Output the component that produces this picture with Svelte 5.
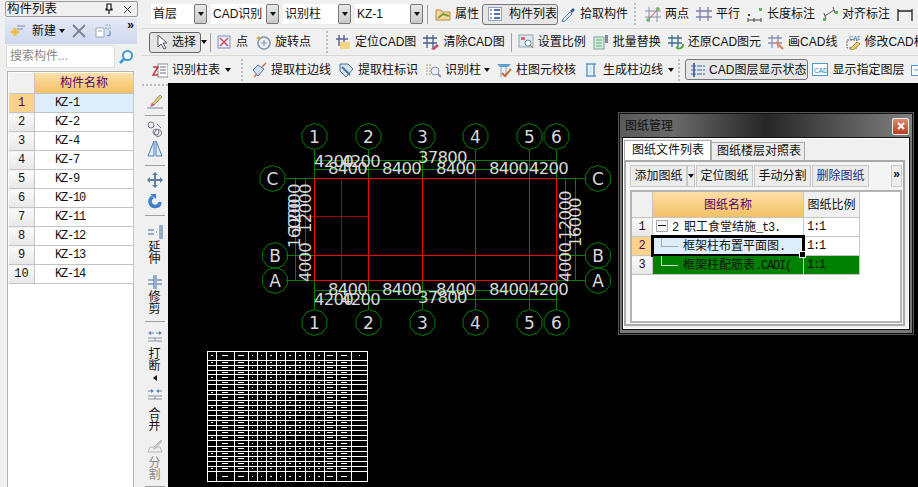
<script>
  const icons = {
    attr: '<path d="M1 4h5l1 2h8v8H1z" fill="#f3d9a0" stroke="#b98b3c"/><path d="M3 12l5-4 6 2" stroke="#7a9a3c" fill="none" stroke-width="2"/>',
    list: '<rect x="1.5" y="1.5" width="13" height="13" fill="#fff" stroke="#8ea4c0"/><path d="M3 4h2M3 8h2M3 12h2" stroke="#445"/><path d="M7 4h6M7 8h6M7 12h6" stroke="#4a76b5" stroke-width="2"/>',
    pick: '<path d="M3 13l7-7 2 2-7 7-3 1z" fill="#dfeaf6" stroke="#5f83b0"/><path d="M10 5l3-3 2 2-3 3z" fill="#3b5f95"/>',
    two: '<path d="M4 1v15M12 1v15M0 5h16M0 11h16" stroke="#8b8fb0"/><path d="M2 15L14 2" stroke="#d05050"/><circle cx="13" cy="3" r="1.7" fill="#5cb85c"/><circle cx="3" cy="14" r="1.7" fill="#5cb85c"/>',
    par: '<path d="M4 1v14M12 1v14M0 5h16M0 11h16" stroke="#7d80a8" stroke-width="1.3"/>',
    len: '<path d="M1 14h13M1 12v4M14 12v4M7 12v4" stroke="#444"/><rect x="1" y="8" width="2" height="2" fill="#444"/><rect x="12" y="2" width="3" height="3" fill="#5cb85c"/>',
    ali: '<path d="M3 10L12 4M2 7l2 6M11 1l2 6" stroke="#555"/><rect x="1" y="12" width="3" height="3" fill="#5cb85c"/><rect x="13" y="5" width="3" height="3" fill="#5cb85c"/>',
    dim: '<path d="M1 3v12M15 3v12M1 5h14" stroke="#222" stroke-width="1.3"/>',
    cur: '<path d="M5 1v12l3-3 3 5 2-1-3-5h4z" fill="#fff" stroke="#556"/>',
    pt: '<rect x="2" y="2" width="12" height="12" fill="#e9eef8" stroke="#7c8fc4"/><path d="M4 4l8 8M12 4l-8 8" stroke="#d8455a" stroke-width="1.4"/>',
    rot: '<circle cx="9" cy="9" r="6" fill="none" stroke="#7d94b4" stroke-width="1.6"/><path d="M9 6v6M6 9h6" stroke="#7d94b4"/><path d="M1 5l3-3 2 3z" fill="#d59a34"/>',
    loc: '<path d="M4 1v11M9 1v11M1 5h12" stroke="#5f5f9a" stroke-width="1.4"/><rect x="5" y="8" width="10" height="7" fill="#f0d488"/>',
    clr: '<path d="M4 1v13M10 1v13M0 4h14M0 9h14" stroke="#47608a" stroke-width="1.3"/><path d="M8 15l6-5 2 2-5 4z" fill="#c05070"/>',
    scale: '<rect x="1" y="1" width="14" height="12" fill="#dfe9f6" stroke="#8aa"/><rect x="3" y="3" width="4" height="3" fill="#d66"/><circle cx="10" cy="9" r="3" fill="#fff" stroke="#68a"/><path d="M12 11l3 3" stroke="#a63"/>',
    batch: '<rect x="1" y="3" width="10" height="12" fill="#d8ecd8" stroke="#7a9"/><path d="M3 6h6M3 9h6M3 12h6" stroke="#5a8"/><path d="M12 1h3v8h-3z" fill="#889"/>',
    rest: '<path d="M4 1v12M10 1v12M0 4h14M0 9h14" stroke="#3f6d8a" stroke-width="1.3"/><path d="M15 10a4 4 0 0 1-7 3" stroke="#5aa83c" fill="none" stroke-width="2"/>',
    draw: '<path d="M4 1v13M10 1v13M0 4h14M0 9h14" stroke="#8a90ba" stroke-width="1.3"/><path d="M8 8l7 7" stroke="#d88a5c" stroke-width="2.4"/>',
    mod: '<path d="M3 6h10v8H3z" fill="none" stroke="#666" stroke-dasharray="2 1"/><path d="M6 15l7-7 3 2-7 6z" fill="#f2cf70" stroke="#b08a30"/><text x="5" y="6" font-size="6" fill="#2a64b0" font-family="Liberation Sans">CAD</text>',
    tbl: '<rect x="6" y="2" width="10" height="13" fill="#fff" stroke="#889"/><path d="M8 5h6M8 8h6M8 11h6" stroke="#667"/><path d="M1 5h5L1 13h5" fill="none" stroke="#c83c3c" stroke-width="1.5"/>',
    edge: '<path d="M2 8l5-5 6 4-6 7z" fill="#cfe0f4" stroke="#4b78ad"/><path d="M11 5l4-4M3 15l3-3" stroke="#d0783c" stroke-width="1.6"/>',
    mark: '<path d="M2 2h8l5 5-7 8-6-6z" fill="#d5e3f3" stroke="#47709f"/><path d="M4 5l8 8" stroke="#47709f" stroke-width="1.8"/>',
    col: '<circle cx="10" cy="9" r="4" fill="#e8eef6" stroke="#8a98a8"/><path d="M13 12l3 3" stroke="#98a" stroke-width="2"/><path d="M2 2v12M5 2v12" stroke="#b5a37c" stroke-dasharray="2 1"/>',
    chk: '<path d="M1 2h14l-3 3H4z" fill="#5aa0d0"/><path d="M5 5v10M10 5v10" stroke="#8ab"/><path d="M6 11l3 3 6-7" stroke="#c07040" fill="none" stroke-width="2"/>',
    gen: '<path d="M3 2h10M3 14h10M4 2v12M11 2v12" stroke="#5a9ac8" stroke-width="1.4"/><rect x="6" y="4" width="3" height="8" fill="#dce8f3"/>',
    layer: '<path d="M4 1v14" stroke="#1f3c78" stroke-width="1.4"/><path d="M1 4h14M1 8h14M1 12h14" stroke="#2b6aa8" stroke-dasharray="5 1"/>',
    show: '<rect x="0.5" y="1.5" width="15" height="12" fill="#fff" stroke="#4f97cc"/><text x="2" y="10.500" font-size="6.500" fill="#2a7ab8" font-family="Liberation Sans">CAD</text>',
    show2: '<rect x="0.5" y="3.500" width="15" height="10" fill="#fff" stroke="#4f97cc"/><path d="M3 8h6" stroke="#4f97cc"/>'
  };

  const row1 = [
    { i: 'attr', t: '属性' }, { i: 'list', t: '构件列表', on: true }, { i: 'pick', t: '拾取构件' }, { grip: true },
    { i: 'two', t: '两点' }, { i: 'par', t: '平行' }, { i: 'len', t: '长度标注' }, { i: 'ali', t: '对齐标注' }, { i: 'dim', t: '' }
  ];
  const combos = [['首层', 43], ['CAD识别', 55], ['识别柱', 55], ['KZ-1', 55]];
  const row2a = [{ i: 'pt', t: '点' }, { i: 'rot', t: '旋转点' }];
  const row2b = [
    { i: 'loc', t: '定位CAD图' }, { i: 'clr', t: '清除CAD图' }, { sep: true }, { i: 'scale', t: '设置比例' },
    { i: 'batch', t: '批量替换' }, { i: 'rest', t: '还原CAD图元' }, { i: 'draw', t: '画CAD线' }, { i: 'mod', t: '修改CAD标注' }
  ];
  const row3a = [
    { i: 'edge', t: '提取柱边线' }, { i: 'mark', t: '提取柱标识' }, { i: 'col', t: '识别柱', arrow: true },
    { i: 'chk', t: '柱图元校核' }, { i: 'gen', t: '生成柱边线', arrow: true }
  ];
  const parts = ['KZ-1', 'KZ-2', 'KZ-4', 'KZ-7', 'KZ-9', 'KZ-10', 'KZ-11', 'KZ-12', 'KZ-13', 'KZ-14'];

  const cols = [314.5, 368.5, 422.5, 475.5, 529.5, 556.5];
  const names = ['1', '2', '3', '4', '5', '6'];
  const rowsY = [['C', 178.5, 272.5, 598], ['B', 255.5, 275, 598], ['A', 280.5, 275, 598]];
  function octa(cx, cy, r = 13) {
    const p = [];
    for (let k = 0; k < 10; k++) {
      const a = (Math.PI * 2 * k) / 10 + Math.PI / 10;
      p.push((cx + r * Math.cos(a)).toFixed(1) + ',' + (cy + r * Math.sin(a)).toFixed(1));
    }
    return p.join(' ');
  }
  const d8400 = [328, 382, 436, 489];

  const tx = [207.5, 216, 234, 248, 257, 266, 276, 285, 295, 305, 314, 324, 336, 351, 367.5];
  const ty = [351.5, 360, 365, 370, 374, 380, 384, 390, 394, 400, 405, 410, 415, 420, 425, 430, 435, 440, 446, 451, 456, 461, 466, 471, 481.5];
  const dashes = [];
  for (let r = 0; r < ty.length - 1; r++) {
    const y = (ty[r] + ty[r + 1]) / 2;
    for (let c = 0; c < tx.length - 1; c++) {
      const filled = r === 0 || (c === 0 && r % 3 === 1) || (c >= 1 && c <= 6) || (c === 7 && r % 3 !== 1) || (c > 7 && c < 11 && r % 4 > 0) || c === 11 || c === 12;
      if (!filled) continue;
      const mx = (tx[c] + tx[c + 1]) / 2;
      const w = c === 1 || c === 11 || c === 12 || c === 2 ? 6 : 1.5;
      dashes.push({ x: mx - w / 2, y: y - 0.5, w });
    }
  }
</script>

{#snippet icon(name)}
  <svg class="ic" viewBox="0 0 16 16" width="16" height="16">{@html icons[name]}</svg>
{/snippet}

{#snippet tool(it)}
  {#if it.grip}
    <span class="grip"></span>
  {:else if it.sep}
    <span class="sep"></span>
  {:else}
    <span class="tool" class:on={it.on}>
      {@render icon(it.i)}
      {#if it.t}<span>{it.t}</span>{/if}
      {#if it.arrow}<i class="arr"></i>{/if}
    </span>
  {/if}
{/snippet}

<div class="app">
  <aside class="left">
    <header class="phead">
      <span class="ptitle">构件列表</span>
      <svg class="pin" viewBox="0 0 10 12" width="10" height="12"><path d="M3 1h4v5h1v1H2V6h1zM5 7v4" fill="none" stroke="#111" stroke-width="1.2"/></svg>
      <svg class="close" viewBox="0 0 9 9" width="9" height="9"><path d="M1 1l7 7M8 1L1 8" stroke="#333"/></svg>
    </header>
    <div class="pbar">
      <svg viewBox="0 0 16 16" width="16" height="16"><path d="M7 3h8M7 6h6" stroke="#7a8aa5"/><path d="M5 5v8M1 9h8" stroke="#eebc3f" stroke-width="3"/></svg>
      <span class="new">新建</span><i class="arr"></i>
      <svg class="del" viewBox="0 0 14 14" width="14" height="14"><path d="M1 1l12 12M13 1L1 13" stroke="#7d8490" stroke-width="1.8"/></svg>
      <svg class="copy" viewBox="0 0 17 14" width="17" height="14"><path d="M1 4h8v9H1z" fill="#fff" stroke="#9aa"/><path d="M3 7h4" stroke="#9aa"/><path d="M11 1h4v4h-4z" fill="none" stroke="#8ab" stroke-dasharray="2 1"/><path d="M15 7v4l-3 1" fill="none" stroke="#57c"/></svg>
      <span class="more">»</span>
    </div>
    <div class="search">
      <span class="sinput">搜索构件...</span>
      <svg viewBox="0 0 16 16" width="16" height="16"><circle cx="9.500" cy="6.500" r="4.500" fill="#fff" stroke="#3d98d8" stroke-width="2"/><path d="M6 10l-4 4" stroke="#3d98d8" stroke-width="2.600"/></svg>
    </div>
    <div class="plist">
      <table class="ptable">
        <thead><tr><th class="corner"></th><th class="hname">构件名称</th></tr></thead>
        <tbody>
          {#each parts as p, i}
            <tr class:sel={i === 0}><td class="num">{i + 1}</td><td class="kz">{p}</td></tr>
          {/each}
        </tbody>
      </table>
    </div>
  </aside>

  <div class="main">
    <div class="bars">
      <div class="row r1">
        {#each combos as c}
          <span class="combo">
            <span class="cval" style="width:{c[1]}px">{c[0]}</span>
            <span class="cbtn"><i class="arr"></i></span>
          </span>
        {/each}
        <span class="sep"></span>
        {#each row1 as it}{@render tool(it)}{/each}
      </div>
      <div class="row r2">
        <span class="sel-tool">{@render icon('cur')}<span>选择</span></span>
        <i class="arr a2"></i>
        <span class="sep s2"></span>
        {#each row2a as it}{@render tool(it)}{/each}
        <span class="grip g2"></span>
        {#each row2b as it}{@render tool(it)}{/each}
      </div>
      <div class="row r3">
        <span class="tool first">{@render icon('tbl')}<span>识别柱表</span><i class="arr"></i></span>
        <span class="grip g3"></span>
        {#each row3a as it}{@render tool(it)}{/each}
        <span class="grip g4"></span>
        <span class="tool on wide">{@render icon('layer')}<span>CAD图层显示状态</span></span>
        {@render tool({ i: 'show', t: '显示指定图层' })}
        {@render tool({ i: 'show2', t: '' })}
      </div>
    </div>

    <div class="work">
      <nav class="vbar">
        <span class="vgrip"></span>
        <svg class="mt7" viewBox="0 0 16 16" width="16" height="16"><path d="M0 15h16" stroke="#889"/><path d="M5 11l8-9 2 2-8 8z" fill="#f0c860" stroke="#998"/><path d="M3 14l2-4 3 2z" fill="#d0527a"/></svg>
        <span class="vsep mt6"></span>
        <svg class="mt5" viewBox="0 0 16 16" width="16" height="16"><circle cx="4" cy="4" r="3" fill="#eee" stroke="#778"/><circle cx="11" cy="12" r="3.500" fill="none" stroke="#778"/><circle cx="9" cy="11" r="3" fill="none" stroke="#778"/><path d="M10 3l4 4" stroke="#57c"/></svg>
        <svg class="mt3" viewBox="0 0 16 18" width="16" height="18"><path d="M7 1L1 16h6zM9 1l6 15H9z" fill="#e4ecf8" stroke="#4f7fc0"/></svg>
        <span class="vsep mt7"></span>
        <svg class="mt6" viewBox="0 0 16 16" width="16" height="16"><path d="M8 1v14M1 8h14" stroke="#5f7fa0" stroke-width="2"/><path d="M8 0l3 3H5zM8 16l3-3H5zM0 8l3-3v6zM16 8l-3-3v6z" fill="#5f7fa0"/></svg>
        <svg class="mt5" viewBox="0 0 16 16" width="16" height="16"><path d="M13 9a5 5 0 1 1-7-5" fill="none" stroke="#3f7fd0" stroke-width="3.500"/><path d="M3 1h6v5z" fill="#3f7fd0"/></svg>
        <span class="vsep mt6"></span>
        <svg class="mt8" viewBox="0 0 16 16" width="16" height="16"><path d="M1 6h6M1 10h6" stroke="#3d68a8"/><path d="M9 8h2" stroke="#3d68a8" stroke-dasharray="1 1"/><path d="M13 1v14M15 1v14" stroke="#3d68a8"/></svg>
        <span class="vt mt1">延伸</span>
        <svg class="mt9" viewBox="0 0 16 16" width="16" height="16"><path d="M1 6h6M1 10h6M10 6h5M10 10h5" stroke="#3d68a8"/><path d="M7 1v14M9 1v14" stroke="#3d68a8"/></svg>
        <span class="vt mt1">修剪</span>
        <span class="vsep mt6"></span>
        <svg class="mt8" viewBox="0 0 16 12" width="16" height="12"><path d="M2 3h5M9 3h5" stroke="#5c86c0"/><path d="M1 3l3-2v4zM15 3l-3-2v4z" fill="#5c86c0"/><path d="M1 8h14M1 11h14M8 8v3" stroke="#8a94a8"/></svg>
        <span class="vt mt6">打断</span>
        <i class="larr"></i>
        <svg class="mt7" viewBox="0 0 16 12" width="16" height="12"><path d="M1 3h5M10 3h5" stroke="#5c86c0"/><path d="M7 3L4 1v4zM9 3l3-2v4z" fill="#5c86c0"/><path d="M1 8h14M1 11h14M8 8v3" stroke="#8a94a8"/></svg>
        <span class="vt mt8">合并</span>
        <svg class="mt6" viewBox="0 0 16 16" width="16" height="16"><path d="M1 14h14M3 9h10l2 5M1 14l2-5" fill="#eee" stroke="#b8b8b8"/><path d="M6 10l8-8 1 1-7 8z" fill="#ccc" stroke="#b8b8b8"/></svg>
        <span class="vt dis mt3">分割</span>
        <span class="vsep mt5"></span>
      </nav>

      <div class="canvas">
        <svg class="cad" viewBox="168 83 750 404" width="750" height="404">
          <g stroke="#007c00" fill="none" shape-rendering="crispEdges">
            <path d="M314.5 160H557M314.5 169.500H557M314.500 290.500H557M314.500 299.500H557M295.500 178V281M305.500 178V281M565.500 178V281M575.500 178V281"/>
            {#each cols as x}
              <path d="M{x} 150V178M{x} 281V309"/>
            {/each}
            {#each rowsY as r}
              <path d="M286 {r[1]}H314M557 {r[1]}H585"/>
            {/each}
          </g>
          <g stroke="#008000" fill="none">
            {#each cols as x}
              <polygon points={octa(x, 136.5)}/>
              <polygon points={octa(x, 322.5)}/>
            {/each}
            {#each rowsY as r}
              <polygon points={octa(r[2], r[1])}/>
              <polygon points={octa(r[3], r[1])}/>
            {/each}
          </g>
          <g stroke="#a80000" shape-rendering="crispEdges">
            <path d="M341.500 178V281M305 216.500H368"/>
          </g>
          <g stroke="#ff0000" fill="none" shape-rendering="crispEdges">
            <rect x="314.5" y="178.500" width="242" height="102"/>
            <path d="M368.500 178V281M422.500 178V281M475.500 178V281M529.500 178V281M314 255.500H557"/>
          </g>
          <g class="dim">
            {#each cols as x, i}
              <text class="bub" x={x} y="143">{names[i]}</text>
              <text class="bub" x={x} y="329">{names[i]}</text>
            {/each}
            {#each rowsY as r}
              <text class="bub" x={r[2]} y={r[1] + 6}>{r[0]}</text>
              <text class="bub" x={r[3]} y={r[1] + 6}>{r[0]}</text>
            {/each}
            {#each d8400 as x}
              <text x={x} y="174">8400</text>
              <text x={x} y="295">8400</text>
            {/each}
            <text x="314" y="167">4200</text><text x="341" y="167">4200</text>
            <text x="529" y="174">4200</text><text x="529" y="295">4200</text>
            <text x="314" y="305">4200</text><text x="341" y="305">4200</text>
            <text x="418" y="163">37800</text><text x="418" y="303">37800</text>
            <text transform="translate(311 282) rotate(-90)">4000</text>
            <text transform="translate(311 233) rotate(-90)">12000</text>
            <text transform="translate(300 233) rotate(-90)">12000</text>
            <text transform="translate(300 248) rotate(-90)">16000</text>
            <text transform="translate(571 282) rotate(-90)">4000</text>
            <text transform="translate(571 240) rotate(-90)">12000</text>
            <text transform="translate(581 247) rotate(-90)">16000</text>
          </g>
          <g stroke="#fff" fill="none" shape-rendering="crispEdges">
            <rect x="207.5" y="351.500" width="160" height="130"/>
            {#each tx.slice(1, -1) as x}<path d="M{x} 351V482"/>{/each}
            {#each ty.slice(1, -1) as y}<path d="M207 {y + 0.500 - (y % 1)}H368"/>{/each}
          </g>
          <g fill="#fff" shape-rendering="crispEdges">
            {#each dashes as d}<rect x={d.x} y={d.y} width={d.w} height="1"/>{/each}
          </g>
        </svg>

        <section class="dlg">
          <header class="dtitle">
            <span>图纸管理</span>
            <span class="dx"><svg viewBox="0 0 8 8" width="8" height="8"><path d="M1 1l6 6M7 1L1 7" stroke="#fff" stroke-width="2"/></svg></span>
          </header>
          <div class="dbody">
            <div class="tabs">
              <span class="tab act">图纸文件列表</span>
              <span class="tab">图纸楼层对照表</span>
            </div>
            <div class="pane">
              <div class="dbar">
                <span class="dbtn b1">添加图纸</span>
                <span class="dbtn b2"><i class="arr"></i></span>
                <span class="dbtn b1">定位图纸</span>
                <span class="dbtn b1">手动分割</span>
                <span class="dbtn b1 blue">删除图纸</span>
                <span class="dbtn b3">»</span>
              </div>
              <div class="dlist">
                <table class="dtable">
                  <thead><tr><th class="c0"></th><th class="c1">图纸名称</th><th class="c2">图纸比例</th></tr></thead>
                  <tbody>
                    <tr><td class="n">1</td><td class="nm"><span class="minus"></span><span class="mn">2&nbsp;</span>职工食堂结施<span class="mn">_t3.</span></td><td class="rt">1:1</td></tr>
                    <tr class="cur"><td class="n">2</td><td class="nm ind"><span class="tree t1"></span>框架柱布置平面图<span class="mn">.</span><span class="handle"></span></td><td class="rt">1:1</td></tr>
                    <tr class="grn"><td class="n">3</td><td class="nm ind"><span class="tree t2"></span>框架柱配筋表<span class="mn">.CADI(</span></td><td class="rt">1:1</td></tr>
                  </tbody>
                </table>
              </div>
            </div>
          </div>
        </section>
      </div>
    </div>
  </div>
</div>

<style>
  :global(body) { margin: 0; background: #000; }
  .app {
    width: 918px; height: 487px; display: flex; overflow: hidden; background: #f0f0f0; color: #111;
    font: 12px/16px "Liberation Sans", "Noto Sans CJK SC", sans-serif;
  }
  i { display: block; font-style: normal; }
  .arr { width: 0; height: 0; border: 3px solid transparent; border-top: 4px solid #111; border-bottom: 0; flex: none; }
  svg { display: block; flex: none; }

  .left { width: 141px; flex: none; padding: 1px 4px 0 5px; box-sizing: border-box; display: flex; flex-direction: column; }
  .phead { height: 14px; border: 1px solid #9a9a9a; border-radius: 2px; display: flex; align-items: center; padding-left: 1px; width: 130px; }
  .ptitle { font-size: 12.5px; flex: 1; }
  .pin { margin-right: 9px; }
  .close { margin-right: 5px; }
  .pbar { height: 26px; margin-top: 1px; display: flex; align-items: center; padding-left: 5px; background: linear-gradient(#e6eaf6, #d6def2 60%, #cfd8ee); position: relative; }
  .new { margin: 0 3px 0 6px; }
  .del { margin-left: 7px; }
  .copy { margin-left: 9px; }
  .more { position: absolute; right: 3px; top: 1px; font-size: 12px; line-height: 12px; font-weight: bold; }
  .search { height: 25px; display: flex; align-items: center; padding-left: 2px; gap: 3px; }
  .sinput { width: 104px; height: 21px; line-height: 21px; background: #fff; border: 1px solid #dcdcdc; color: #888; padding-left: 3px; box-sizing: content-box; margin-left: -1px; }
  .plist { flex: 1; margin: 2px 0 0 2px; width: 127px; background: #fff; border: 1px solid #b4b4b4; border-bottom: 0; padding: 1px 0 0 1px; box-sizing: border-box; }
  .ptable { border-collapse: collapse; width: 125px; table-layout: fixed; }
  .ptable th, .ptable td { height: 18px; padding: 0; border: 1px solid #c4c4c4; border-width: 0 1px 1px 0; }
  .corner { width: 25px; background: #f0f0f0; }
  .hname { height: 20px !important; font-weight: normal; color: #5a006a; background: linear-gradient(#fbdfa8, #f3c063); }
  .num { text-align: center; background: linear-gradient(#fafafa, #e8e8e8); font: 12px "Liberation Mono", monospace; }
  .kz { padding-left: 20px !important; font: 12px "Liberation Mono", monospace; letter-spacing: -1.2px; }
  .sel .num { background: #fdd28a; color: #5a006a; }
  .sel .kz { background: #deedfc; }

  .main { flex: 1; min-width: 0; display: flex; flex-direction: column; }
  .bars { height: 83px; flex: none; }
  .row { display: flex; align-items: center; white-space: nowrap; box-sizing: border-box; border-bottom: 1px solid #d8d8d8; }
  .r1 { height: 29px; padding-left: 10px; }
  .r2 { height: 27px; padding-left: 8px; }
  .r3 { height: 27px; padding-left: 11px; border-bottom: 0; }
  .combo { display: flex; margin-right: 4px; height: 20px; }
  .cval { background: #fff; padding-left: 2px; box-sizing: border-box; line-height: 20px; }
  .cbtn { width: 13px; box-sizing: border-box; border: 1px solid #777; border-radius: 2px; background: linear-gradient(#e8e8e8, #c8c8c8); display: flex; align-items: center; justify-content: center; }
  .tool { display: inline-flex; align-items: center; gap: 4px; margin-right: 7px; flex: none; }
  .tool.on { margin: 0 2px 0 -4px; padding: 0 0 0 4px; height: 21px; border: 1px solid #777; border-radius: 3px; background: #e6e6e6; gap: 6px; box-sizing: border-box; }
  .tool.wide { margin-left: 0; margin-right: 4px; padding: 0 1px 0 4px; gap: 3px; }
  .sep { width: 1px; height: 19px; background: #a0a0a0; margin: 0 7px 0 0; flex: none; }
  .grip { width: 2px; height: 22px; flex: none; margin: 0 9px 0 -1px; background: repeating-linear-gradient(#bcbcbc 0 2px, transparent 2px 4px); }
  .sel-tool { width: 52px; height: 21px; box-sizing: border-box; border: 1px solid #666; border-radius: 3px; background: #e4e4e4; display: flex; align-items: center; gap: 3px; padding-left: 3px; flex: none; }
  .a2 { margin-right: 1px; }
  .r2 .sep { margin: 0 6px 0 -1px; }
  .r2 .s2 { margin: 0 5px 0 2px; }
  .r2 .g2 { margin: 0 7px 0 8px; }
  .r3 .g3 { margin: 0 8px 0 3px; }
  .r3 .g4 { margin: 0 5px 0 -2px; }
  .r3 .tool .arr { margin: 0 -1px; }
  .r3 .tool.first .arr { margin: 0 0 0 1px; }
  .r3 .tool:has(+ .g4) .arr { margin: 0 -1px 0 1px; }

  .work { flex: 1; display: flex; min-height: 0; }
  .vbar { width: 27px; flex: none; background: #f0f0f0; display: flex; flex-direction: column; align-items: center; }
  .vgrip { width: 26px; height: 2px; margin-top: 1px; flex: none; background: repeating-linear-gradient(90deg, #bcbcbc 0 2px, transparent 2px 4px); }
  .mt1 { margin-top: 1px; }
  .mt3 { margin-top: 3px; }
  .mt5 { margin-top: 5px; }
  .mt6 { margin-top: 6px; }
  .mt7 { margin-top: 7px; }
  .mt8 { margin-top: 8px; }
  .mt9 { margin-top: 9px; }
  .vsep { width: 20px; height: 1px; background: #a0a0a0; flex: none; }
  .vt { width: 12px; line-height: 12px; white-space: normal; text-align: center; flex: none; }
  .dis { color: #888; }
  .larr { width: 0; height: 0; border: 3px solid transparent; border-right: 4px solid #111; border-left: 0; margin-top: 3px; flex: none; }

  .canvas { flex: 1; position: relative; background: #000; overflow: hidden; min-width: 0; }
  .cad { position: absolute; left: 0; top: 0; }
  .dim text { fill: #d8d8d8; font: 16.5px "DejaVu Sans", sans-serif; letter-spacing: -0.75px; }
  .dim text.bub { text-anchor: middle; font-size: 17px; letter-spacing: 0; }

  .dlg { position: absolute; left: 451px; top: 30px; width: 294px; height: 221px; box-sizing: border-box; border: 1px solid #111; background: #787878; display: flex; flex-direction: column; padding: 0 3px 4px; outline: 1px solid #555; }
  .dtitle { height: 24px; flex: none; margin: 0 -3px; padding: 0 3px 0 5px; display: flex; align-items: center; justify-content: space-between; background: linear-gradient(90deg, #5a5a5a, #6a6a6a 18%, #262626 50%, #6e6e6e 90%, #808080); color: #111; }
  .dx { width: 17px; height: 17px; border-radius: 2px; background: linear-gradient(#e08a70, #b83c24); border: 1px solid #eee; box-sizing: border-box; display: flex; align-items: center; justify-content: center; }
  .dbody { flex: 1; border: 1px solid #fff; padding: 2px 3px 2px 0; min-height: 0; display: flex; background: #f0f0f0; flex-direction: column; outline: 1px solid #111; }
  .tabs { display: flex; align-items: flex-end; height: 19px; flex: none; }
  .tab { height: 17px; line-height: 17px; border: 1px solid #aaa; border-width: 1px 1px 0 0; padding: 0 3px 0 5px; background: #ececec; }
  .tab.act { height: 19px; line-height: 19px; background: #fff; padding: 0 6px 0 7px; border-width: 1px 2px 0 1px; }
  .pane { flex: 1; border: 2px solid #aaa; background: #f4f4f4; padding: 3px 1px 1px 4px; display: flex; flex-direction: column; min-height: 0; }
  .dbar { height: 22px; display: flex; gap: 1px; flex: none; position: relative; }
  .dbtn { background: #ececec; border: 1px solid #c8c8c8; box-sizing: border-box; display: flex; align-items: center; justify-content: center; }
  .b1 { width: 57px; }
  .b2 { width: 8px; margin-left: -1px; }
  .blue { color: #232a8a; }
  .b3 { position: absolute; right: 0; top: 0; width: 11px; height: 22px; align-items: flex-start; font-weight: bold; }
  .dlist { flex: 1; margin-top: 3px; border: 2px solid #b4b4b4; background: #fff; min-height: 0; }
  .dtable { border-collapse: collapse; table-layout: fixed; width: 228px; }
  .dtable th, .dtable td { padding: 0; border: 1px solid #c4c4c4; border-width: 0 1px 1px 0; height: 18px; font-weight: normal; }
  .c0 { width: 20px; background: #f0f0f0; height: 25px !important; }
  .c1 { width: 150px; background: linear-gradient(#fbdfa8, #f3c063); color: #5a006a; }
  .c2 { background: #f0f0f0; }
  .n { text-align: center; background: linear-gradient(#fafafa, #e8e8e8); font: 12px "Liberation Mono", monospace; }
  .nm { position: relative; padding-left: 3px !important; white-space: nowrap; overflow: visible; }
  .mn { font-family: "Liberation Mono", monospace; letter-spacing: -1.2px; white-space: pre; }
  .rt { padding-left: 3px !important; font: 12px "Liberation Mono", monospace; letter-spacing: -1.2px; }
  .minus { display: inline-block; width: 10px; height: 10px; border: 1px solid #aaa; margin: 0 4px 0 0; vertical-align: -1px; background: linear-gradient(#111, #111) center / 8px 1px no-repeat, #f4f4f4; }
  .ind { padding-left: 30px !important; }
  .tree { position: absolute; left: 8px; border-left: 1px solid #aaa; border-bottom: 1px solid #aaa; width: 16px; top: 0; height: 9px; }
  .cur .n { background: #fdd28a; color: #5a006a; }
  .cur .nm { background: #deedfc; }
  .cur .nm::after { content: ""; position: absolute; inset: -2px -2px -2px -2px; border: 3px solid #000; pointer-events: none; }
  .handle { position: absolute; right: -3px; bottom: -3px; width: 5px; height: 5px; background: #000; border: 1px solid #fff; z-index: 1; }
  .grn .nm, .grn .rt { background: #008000; }
  .grn .tree { border-color: #cfe6cf; }
</style>
